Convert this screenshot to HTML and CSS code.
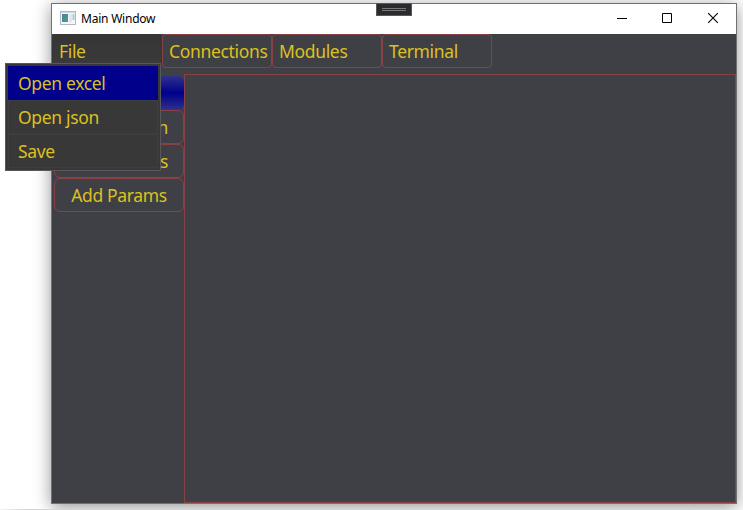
FILE: index.html
```html
<!DOCTYPE html>
<html lang="en">
<head>
<meta charset="utf-8">
<title>Main Window</title>
<link rel="stylesheet" href="styles.css">
</head>
<body>
<div class="window">
  <header class="titlebar">
    <svg class="app-icon" width="16" height="14" viewBox="0 0 16 14">
      <defs><linearGradient id="pane" x2="1" y2="1"><stop stop-color="#4b7fb0"/><stop offset="1" stop-color="#45a078"/></linearGradient></defs>
      <rect x=".5" y=".5" width="15" height="13" fill="#f4f6f8" stroke="#b3b8bd"/>
      <path d="M1 1.500h14" stroke="#d5d9de"/>
      <rect x="2" y="3" width="6" height="8" fill="url(#pane)"/>
      <rect x="9" y="3" width="3" height="8" fill="#dfe7ee"/>
      <rect x="12.500" y="3" width="2" height="6" fill="#a9cdd0"/>
    </svg>
    <span class="title">Main Window</span>
    <svg class="controls" width="138" height="30" viewBox="0 0 138 30" fill="none" stroke="#000">
      <path d="M19 14.500h10M64.500 9.500h9v9h-9z"/>
      <path d="M110.200 9.200l9.600 9.600M119.800 9.200l-9.600 9.600" stroke-width="1.100"/>
    </svg>
  </header>
  <nav class="menubar">
    <div class="menu open">File</div>
    <div class="menu">Connections</div>
    <div class="menu">Modules</div>
    <div class="menu">Terminal</div>
  </nav>
  <div class="body">
    <aside class="sidebar">
      <button class="side active"></button>
      <button class="side partial">n</button>
      <button class="side partial">s</button>
      <button class="side">Add Params</button>
    </aside>
    <main class="panel"></main>
  </div>
</div>
<div class="grip"><i></i><i></i></div>
<div class="dropdown">
  <div class="item selected">Open excel</div>
  <div class="item">Open json</div>
  <div class="item">Save</div>
</div>
<div class="edge"></div>
</body>
</html>
```
FILE: styles.css
```css
* { box-sizing: border-box; }
body {
  margin: 0;
  width: 743px;
  height: 510px;
  padding: 3px 0 0 51px;
  position: relative;
  overflow: hidden;
  background: #fff;
  color: #dcc01f;
  font: 17.5px/32px "Noto Sans", "Open Sans", sans-serif;
  letter-spacing: -.34px;
}
.window {
  width: 686px;
  height: 501px;
  border: 1px solid #707174;
  background: #3f4045;
  display: flex;
  flex-direction: column;
  box-shadow: 0 3px 16px rgba(0, 0, 0, .42);
}
.titlebar {
  height: 30px;
  flex: none;
  display: flex;
  align-items: center;
  background: #fff;
  color: #000;
  padding-left: 8px;
}
.app-icon { position: relative; top: -1px; }
.title { font-size: 12px; line-height: 30px; margin-left: 5px; letter-spacing: -.22px; }
.controls { margin-left: auto; }
.menubar { display: flex; height: 40px; flex: none; }
.menu {
  width: 110px;
  height: 34px;
  border: 1px solid #884245;
  border-radius: 4px;
  padding-left: 6px;
  white-space: nowrap;
}
.menu.open { background: linear-gradient(#353535, #3b3b3b); border-color: #343638; }
.body { flex: 1; display: flex; }
.sidebar { width: 132px; padding: 2px 0 0 2px; display: flex; flex-direction: column; }
.side {
  height: 34px;
  padding: 0;
  border: 1px solid #884245;
  border-radius: 6px;
  background: none;
  color: inherit;
  font: inherit;
  letter-spacing: inherit;
}
.side.active { border: 0; background: linear-gradient(#30308c, #00008b 50%, #30308c); }
.side.partial { text-align: right; padding-right: 15px; }
.panel { flex: 1; border: 1px solid #884245; }
.grip {
  position: absolute;
  left: 376px;
  top: 3px;
  width: 36px;
  height: 13px;
  border: 1px solid #58585a;
  background: #2b2b2e;
  padding: 4px 5px;
}
.grip i { display: block; height: 1px; background: #77777a; margin-bottom: 1px; }
.dropdown {
  position: absolute;
  left: 5px;
  top: 63px;
  width: 156px;
  height: 108px;
  border: 1px solid #58585a;
  background: #383838;
  padding: 2px;
}
.item { height: 34px; border: 1px solid #3d3e41; padding-left: 9px; }
.item.selected { background: #00008b; border-color: #00008b; }
.edge {
  position: absolute;
  left: 0;
  top: 509px;
  width: 692px;
  height: 1px;
  background: linear-gradient(90deg, #f2f2f2, #d4d4d4 30px);
}
```
